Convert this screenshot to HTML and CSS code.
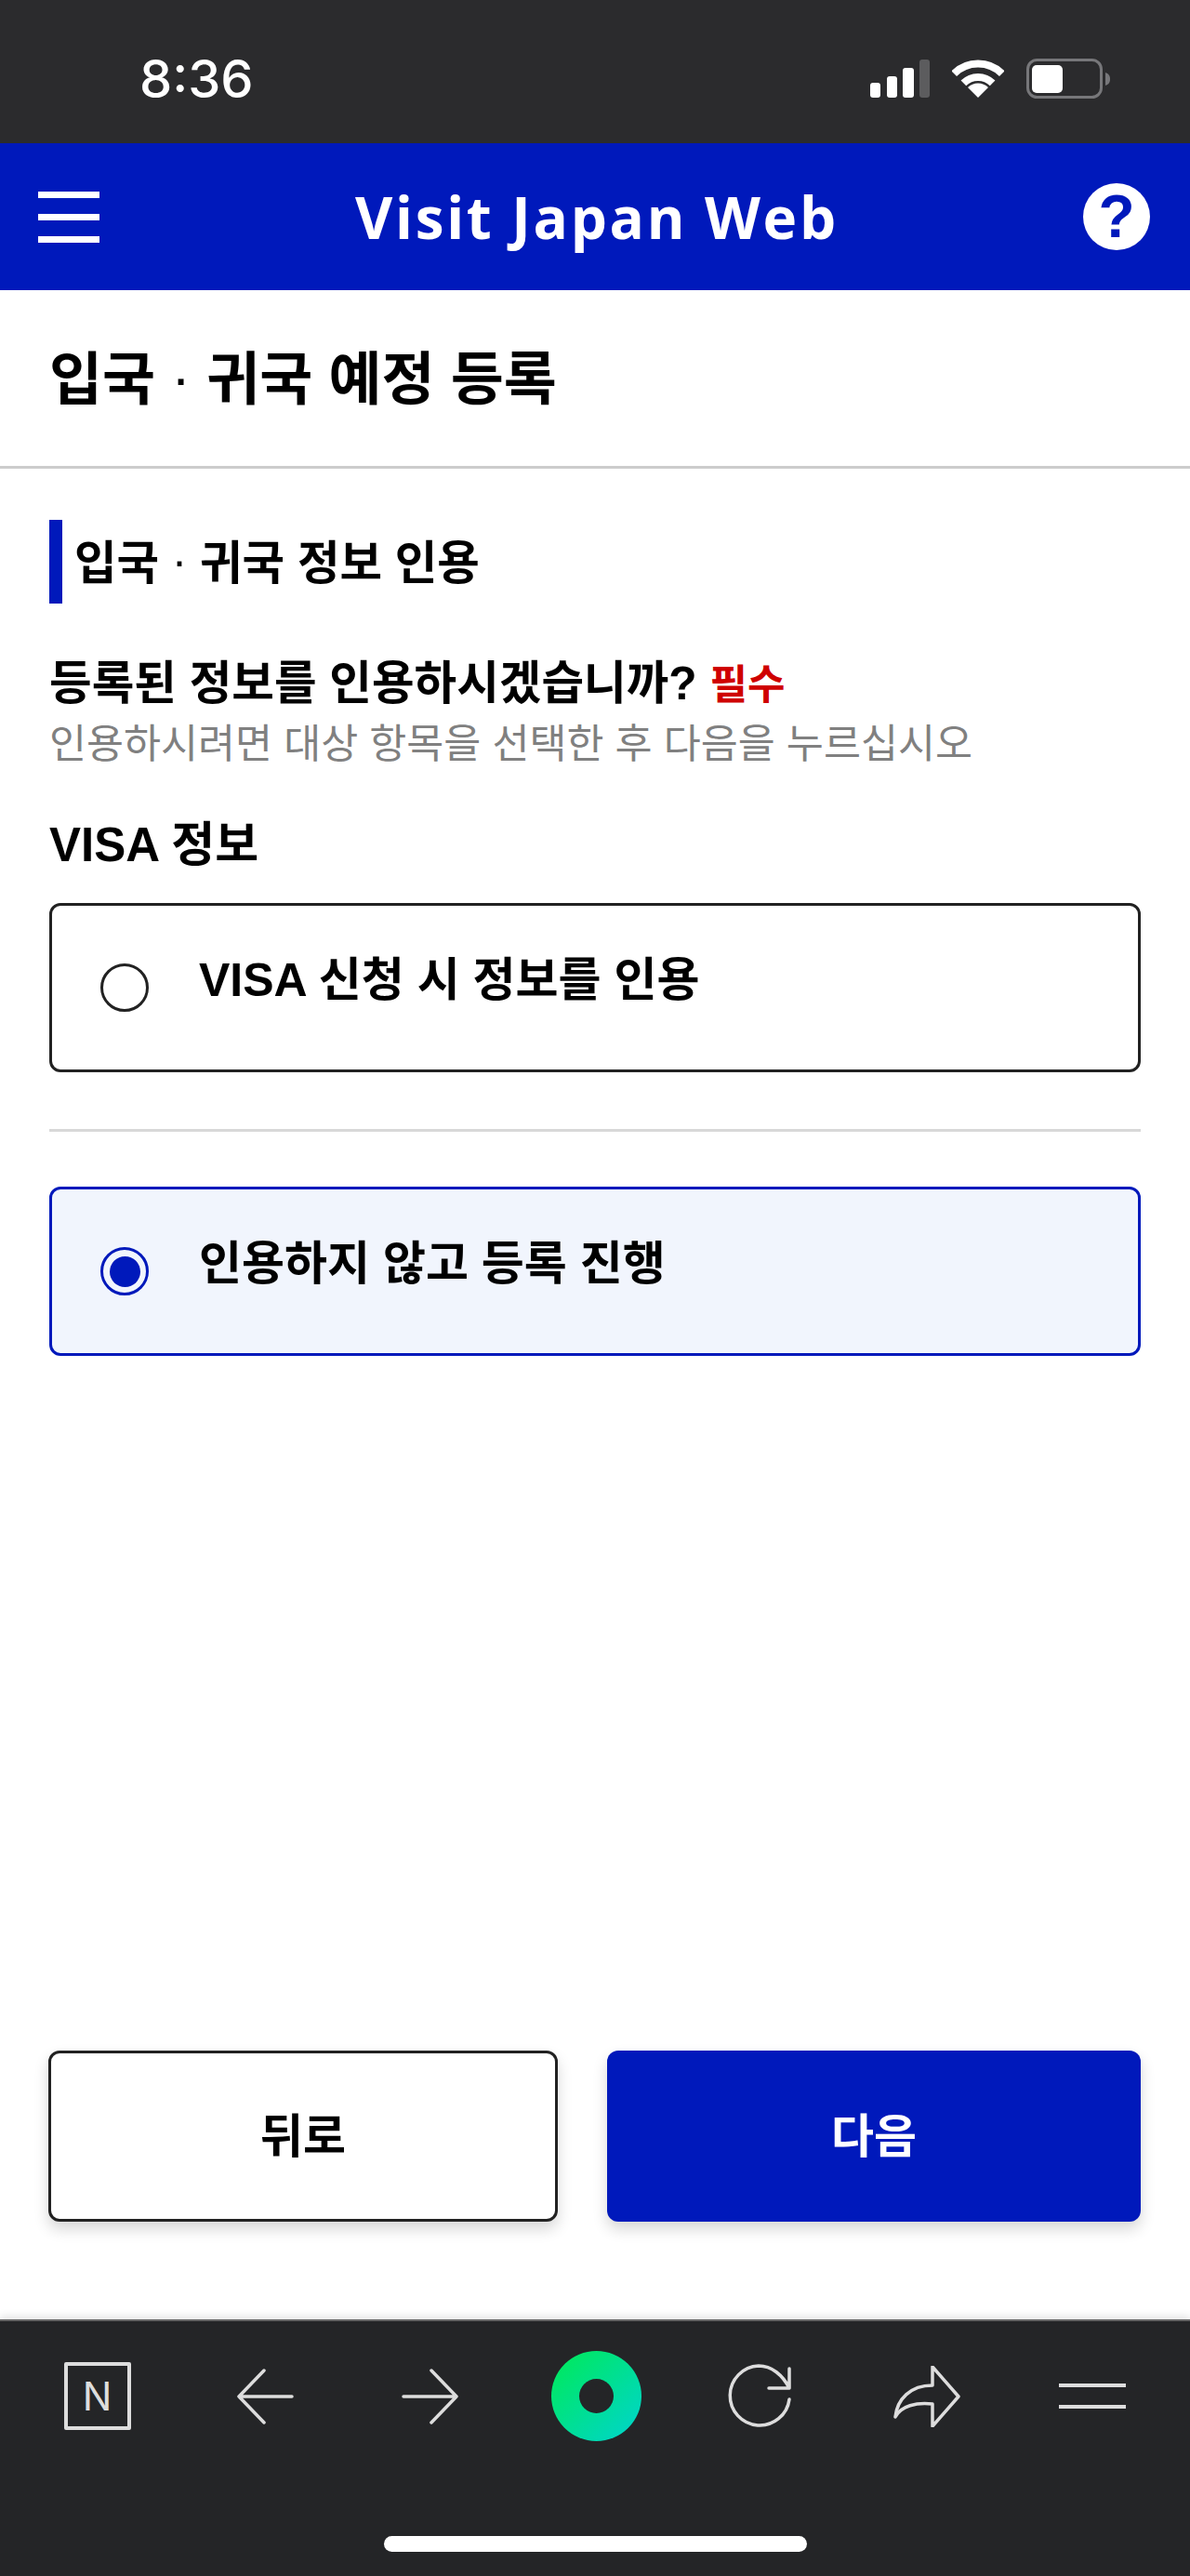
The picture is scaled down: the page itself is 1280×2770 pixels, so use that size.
FILE: index.html
```html
<!DOCTYPE html>
<html lang="ko">
<head>
  <meta charset="UTF-8" />
  <title>Visit Japan Web</title>
  <link rel="stylesheet" href="styles.css">
</head>
<body>
  <div class="status-bar">
    <span class="time">8:36</span>
    <div class="status-icons">
      <svg width="64" height="44" viewBox="0 0 64 44">
        <rect x="0" y="26" width="11" height="16" rx="3" fill="#fff"/>
        <rect x="18" y="19" width="11" height="23" rx="3" fill="#fff"/>
        <rect x="35" y="10" width="12" height="32" rx="3" fill="#fff"/>
        <rect x="53" y="1" width="11" height="41" rx="3" fill="#5c5c5e"/>
      </svg>
      <svg width="56" height="44" viewBox="0 0 56 44">
        <path d="M2.2 16.2A36.5 36.5 0 0 1 53.8 16.2" fill="none" stroke="#fff" stroke-width="8"/>
        <path d="M12.4 26.4A22 22 0 0 1 43.6 26.4" fill="none" stroke="#fff" stroke-width="8"/>
        <path d="M28 42L17 31A15.5 15.5 0 0 1 39 31Z" fill="#fff"/>
      </svg>
      <svg width="90" height="44" viewBox="0 0 90 44">
        <rect x="1.5" y="1.5" width="79" height="40" rx="10" fill="none" stroke="#77777a" stroke-width="3"/>
        <rect x="6" y="7" width="33" height="30" rx="5" fill="#fff"/>
        <path d="M85 15C88 16 90 18 90 22C90 26 88 28 85 29Z" fill="#77777a"/>
      </svg>
    </div>
  </div>

  <header class="app-header">
    <div class="hamburger"><span></span><span></span><span></span></div>
    <h1 class="app-title">Visit Japan Web</h1>
    <div class="help">?</div>
  </header>

  <main class="page">
    <h2 class="page-title">입국 <span class="dot">·</span> 귀국 예정 등록</h2>

    <section class="content">
      <h3 class="section-title">입국 <span class="dot">·</span> 귀국 정보 인용</h3>

      <p class="question">등록된 정보를 인용하시겠습니까? <span class="required">필수</span></p>
      <p class="hint">인용하시려면 대상 항목을 선택한 후 다음을 누르십시오</p>

      <p class="group-label">VISA 정보</p>

      <div class="option">
        <span class="radio"></span>
        <span class="option-text">VISA 신청 시 정보를 인용</span>
      </div>
      <hr class="divider">
      <div class="option selected">
        <span class="radio"></span>
        <span class="option-text">인용하지 않고 등록 진행</span>
      </div>
    </section>

    <div class="actions">
      <button class="btn btn-back">뒤로</button>
      <button class="btn btn-next">다음</button>
    </div>
  </main>

  <nav class="browser-bar">
    <div class="browser-icons">
      <div class="n-box">N</div>
      <svg width="62" height="60" viewBox="0 0 62 60">
        <path d="M30 2L3 30L30 58M3 30H60" class="line"/>
      </svg>
      <svg width="62" height="60" viewBox="0 0 62 60">
        <path d="M32 2L59 30L32 58M59 30H2" class="line"/>
      </svg>
      <div class="green-dot"></div>
      <svg class="reload" width="70" height="70" viewBox="0 0 70 70">
        <path d="M67 38A32 32 0 1 1 34 2C48 2 60 12 67 26M67 5V26H45" class="line"/>
      </svg>
      <svg width="72" height="66" viewBox="0 0 72 66">
        <path d="M42 1L70 33L42 65V41C25 39 8 43 2 55C4 36 18 21 42 21Z" class="line"/>
      </svg>
      <div class="two-lines"><span></span><span></span></div>
    </div>
    <div class="home-indicator"></div>
  </nav>
</body>
</html>
```

FILE: styles.css
```css
* {
  box-sizing: border-box;
}
body {
  margin: 0;
  width: 1280px;
  height: 2770px;
  display: flex;
  flex-direction: column;
  background: #fff;
  color: #000;
  font-family: "Liberation Sans", "Noto Sans CJK KR", sans-serif;
}
h1, h2, h3, p {
  margin: 0;
}

/* phone status bar */
.status-bar {
  height: 154px;
  background: #2b2b2d;
  display: flex;
  justify-content: space-between;
  padding: 63px 86px 0 150px;
}
.time {
  color: #fff;
  font-family: Inter, sans-serif;
  font-size: 56px;
  font-weight: 500;
  line-height: 44px;
}
.status-icons {
  display: flex;
  gap: 24px;
  height: 44px;
}

/* blue header */
.app-header {
  height: 158px;
  background: #0019bb;
  display: grid;
  grid-template-columns: 1fr auto 1fr;
  align-items: center;
  padding: 0 43px 0 41px;
}
.hamburger {
  width: 66px;
  display: flex;
  flex-direction: column;
  gap: 17px;
}
.hamburger span {
  height: 7px;
  background: #fff;
}
.app-title {
  margin-left: 6px;
  color: #fff;
  font-family: "Open Sans", sans-serif;
  font-size: 62px;
  font-weight: 700;
  letter-spacing: 2.7px;
  line-height: 1;
}
.help {
  justify-self: end;
  width: 72px;
  height: 72px;
  border-radius: 50%;
  background: #fff;
  color: #0019bb;
  font-family: "Liberation Sans", sans-serif;
  font-size: 64px;
  font-weight: 700;
  line-height: 72px;
  text-align: center;
}

.page {
  flex: 1;
  display: flex;
  flex-direction: column;
}
.page-title {
  height: 192px;
  border-bottom: 3px solid #ccc;
  padding-left: 53px;
  font-size: 62px;
  font-weight: 700;
  line-height: 188px;
}
.dot {
  font-weight: 400;
  vertical-align: 3px;
}
.content {
  padding: 55px 53px 0;
}
.section-title {
  height: 90px;
  border-left: 14px solid #0019bb;
  padding-left: 13px;
  font-size: 49.5px;
  font-weight: 700;
  line-height: 88px;
}
.question {
  margin-top: 56px;
  font-size: 49.6px;
  font-weight: 700;
  line-height: 60px;
}
.required {
  color: #cf0000;
  font-size: 44px;
}
.hint {
  margin-top: 2px;
  color: #808080;
  font-size: 43.5px;
  line-height: 62px;
}
.group-label {
  margin-top: 47px;
  font-size: 51px;
  font-weight: 700;
  line-height: 62px;
}
.option {
  margin-top: 31px;
  height: 182px;
  border: 3px solid #222;
  border-radius: 12px;
  display: flex;
  align-items: center;
  gap: 54px;
  padding-left: 52px;
}
.divider + .option {
  margin-top: 0;
}
.radio {
  width: 52px;
  height: 52px;
  flex: none;
  border: 3px solid #222;
  border-radius: 50%;
  display: flex;
  align-items: center;
  justify-content: center;
}
.option-text {
  font-size: 50px;
  font-weight: 700;
  margin-bottom: 27px;
}
.option.selected {
  border-color: #0019bb;
  background: #f1f5fd;
}
.selected .radio {
  border-color: #0019bb;
}
.selected .radio::after {
  content: "";
  width: 33px;
  height: 33px;
  border-radius: 50%;
  background: #0019bb;
}
.divider {
  border: 0;
  height: 3px;
  background: #d8d8d8;
  margin: 61px 0 59px;
}

.actions {
  margin-top: auto;
  padding: 0 53px 105px 52px;
  display: flex;
  gap: 53px;
}
.btn {
  height: 184px;
  padding-bottom: 10px;
  border-radius: 12px;
  font-family: inherit;
  font-size: 50px;
  font-weight: 700;
  box-shadow: 0 8px 16px rgba(0, 0, 0, 0.16);
}
.btn-back {
  width: 548px;
  background: #fff;
  border: 3px solid #222;
  color: #000;
}
.btn-next {
  flex: 1;
  background: #0019bb;
  border: 0;
  color: #fff;
}

/* browser toolbar */
.browser-bar {
  height: 276px;
  background: #242527;
  border-top: 2px solid #666;
  box-shadow: 0 -4px 8px rgba(0, 0, 0, 0.1);
  padding-top: 32px;
}
.browser-icons {
  display: grid;
  grid-template-columns: repeat(7, 178px);
  justify-items: center;
  align-items: center;
  height: 97px;
  padding-left: 18px;
}
.line {
  fill: none;
  stroke: #ddd;
  stroke-width: 3.5;
  stroke-linecap: round;
  stroke-linejoin: round;
}
.reload {
  margin-right: 5px;
}
.n-box {
  width: 72px;
  height: 73px;
  margin-right: 5px;
  border: 4px solid #ddd;
  border-radius: 2px;
  color: #ddd;
  font-family: Inter, sans-serif;
  font-size: 42px;
  font-weight: 400;
  line-height: 65px;
  text-align: center;
}
.green-dot {
  width: 97px;
  height: 97px;
  border-radius: 50%;
  background: linear-gradient(135deg, #00ea55, #00d4d0);
  display: flex;
  align-items: center;
  justify-content: center;
}
.green-dot::after {
  content: "";
  width: 37px;
  height: 37px;
  border-radius: 50%;
  background: #242527;
}
.two-lines {
  width: 72px;
  display: flex;
  flex-direction: column;
  gap: 19px;
}
.two-lines span {
  height: 4px;
  background: #ddd;
}
.home-indicator {
  width: 455px;
  height: 17px;
  margin: 102px auto 0;
  border-radius: 9px;
  background: #fff;
}
```
